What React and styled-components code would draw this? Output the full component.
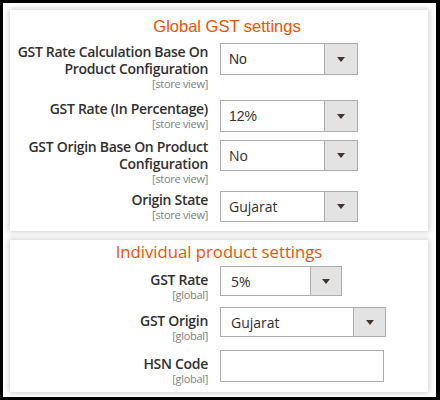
import React from "react";
import styled, { createGlobalStyle } from "styled-components";

const Global = createGlobalStyle`
  html, body { margin: 0; padding: 0; background: #000; }
  * { box-sizing: border-box; }
`;

const Frame = styled.div`
  width: 440px;
  height: 400px;
  background: #fff;
  border-style: solid;
  border-color: #000;
  border-width: 3px 4px 3px 3px;
  padding: 7px 8px 0 7px;
  display: flex;
  flex-direction: column;
  gap: 9px;
  overflow: hidden;
`;

const Panel = styled.section`
  background: #fff;
  box-shadow: 0 0 6px 1px rgba(0, 0, 0, 0.2);
  padding: ${(p) => p.$pt}px 0 ${(p) => p.$pb}px 0;
`;

const Title = styled.h2`
  margin: 0 0 ${(p) => p.$mb}px 0;
  text-align: center;
  font-weight: 400;
  font-size: ${(p) => p.$fs}px;
  line-height: 20px;
  color: #eb5202;
  white-space: nowrap;
  font-family: ${(p) =>
    p.$arial ? '"Liberation Sans", Arial, sans-serif' : '"Open Sans", sans-serif'};
  padding-left: ${(p) => p.$shift}px;
`;

const Field = styled.div`
  display: grid;
  grid-template-columns: 198px 1fr;
  column-gap: 12px;
  align-items: start;
  margin-top: ${(p) => p.$mt || 0}px;
`;

const LabelBox = styled.div`
  text-align: right;
  margin-top: ${(p) => p.$shift || 0}px;
  font-family: "Open Sans", sans-serif;
  white-space: nowrap;
`;

const LabelText = styled.div`
  font-size: 14px;
  line-height: 17px;
  font-weight: 600;
  letter-spacing: -0.3px;
  color: #303030;
`;

const Scope = styled.div`
  font-size: 11px;
  line-height: 14px;
  letter-spacing: -0.3px;
  color: #808080;
`;

const Select = styled.div`
  display: flex;
  width: ${(p) => p.$w}px;
  height: ${(p) => p.$h}px;
  border: 1px solid #adadad;
  background: #fff;
`;

const SelectValue = styled.div`
  flex: 1;
  display: flex;
  align-items: center;
  padding-left: ${(p) => p.$pl}px;
  font-size: 14px;
  color: #303030;
  font-family: ${(p) =>
    p.$arial ? '"Liberation Sans", Arial, sans-serif' : '"Open Sans", sans-serif'};
`;

const ArrowButton = styled.div`
  width: ${(p) => p.$bw}px;
  border-left: 1px solid #adadad;
  background: #e3e3e3;
  display: flex;
  align-items: center;
  justify-content: center;
`;

const Arrow = styled.span`
  width: 0;
  height: 0;
  border-left: 4px solid transparent;
  border-right: 4px solid transparent;
  border-top: 5px solid #41362f;
`;

const TextInput = styled.div`
  width: ${(p) => p.$w}px;
  height: ${(p) => p.$h}px;
  border: 1px solid #adadad;
  background: #fff;
`;

function Dropdown({ value, w, h, bw = 33, pl = 8, arial }) {
  return (
    <Select $w={w} $h={h}>
      <SelectValue $pl={pl} $arial={arial}>{value}</SelectValue>
      <ArrowButton $bw={bw}>
        <Arrow />
      </ArrowButton>
    </Select>
  );
}

function Label({ lines, scope, shift }) {
  return (
    <LabelBox $shift={shift}>
      {lines.map((l) => (
        <LabelText key={l}>{l}</LabelText>
      ))}
      <Scope>{scope}</Scope>
    </LabelBox>
  );
}

export default function App() {
  return (
    <>
      <Global />
      <Frame>
        <Panel $pt={6} $pb={9}>
          <Title $arial $fs={16.5} $mb={7} $shift={16}>Global GST settings</Title>
          <Field>
            <Label lines={["GST Rate Calculation Base On", "Product Configuration"]} scope="[store view]" />
            <Dropdown value="No" w={138} h={32} arial />
          </Field>
          <Field $mt={9}>
            <Label lines={["GST Rate (In Percentage)"]} scope="[store view]" />
            <Dropdown value="12%" w={138} h={32} arial />
          </Field>
          <Field $mt={8}>
            <Label lines={["GST Origin Base On Product", "Configuration"]} scope="[store view]" shift={-2} />
            <Dropdown value="No" w={138} h={31} />
          </Field>
          <Field $mt={5}>
            <Label lines={["Origin State"]} scope="[store view]" />
            <Dropdown value="Gujarat" w={138} h={31} />
          </Field>
        </Panel>
        <Panel $pt={2} $pb={6}>
          <Title $fs={16.7} $mb={4} $shift={0}>Individual product settings</Title>
          <Field>
            <Label lines={["GST Rate"]} scope="[global]" shift={5} />
            <Dropdown value="5%" w={122} h={30} bw={31} pl={10} />
          </Field>
          <Field $mt={5}>
            <Label lines={["GST Origin"]} scope="[global]" shift={5} />
            <Dropdown value="Gujarat" w={166} h={30} bw={32} pl={10} />
          </Field>
          <Field $mt={7}>
            <Label lines={["HSN Code"]} scope="[global]" shift={5} />
            <TextInput $w={164} $h={32} />
          </Field>
        </Panel>
      </Frame>
    </>
  );
}
